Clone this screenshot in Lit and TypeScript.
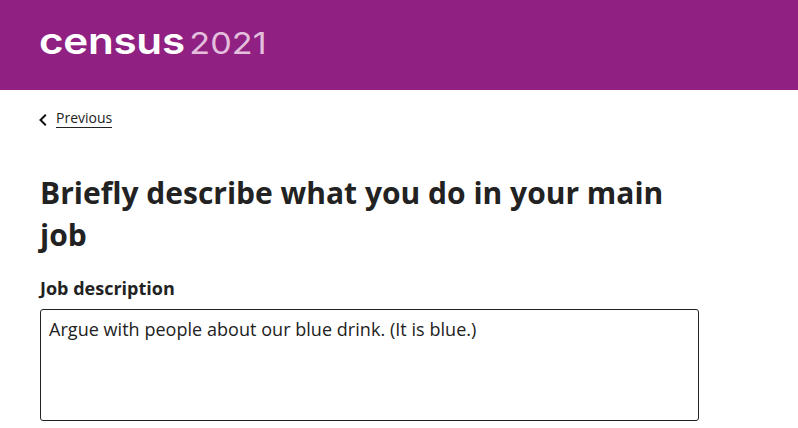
import { LitElement, html, css } from "lit";
import { customElement } from "lit/decorators.js";

@customElement("app-root")
export class AppRoot extends LitElement {
  static styles = css`
    :host {
      display: block;
      width: 798px;
      height: 428px;
      overflow: hidden;
      background: #fff;
      color: #222;
      font-family: "Open Sans", "Noto Sans", sans-serif;
    }
    .header {
      height: 90px;
      background: #902082;
      display: flex;
      align-items: center;
      padding-left: 39px;
      box-sizing: border-box;
    }
    .logo {
      display: flex;
      align-items: baseline;
      gap: 4px;
      font-family: "Inter", sans-serif;
      line-height: 36px;
      margin-top: -6px;
      transform: scaleX(1.14);
      transform-origin: left center;
    }
    .census {
      color: #fff;
      font-size: 37px;
      font-weight: 600;
      letter-spacing: -0.25px;
    }
    .year {
      color: #e3bfdd;
      font-size: 30px;
      font-weight: 400;
    }
    .main {
      padding: 0 40px;
    }
    .back {
      display: flex;
      align-items: center;
      gap: 9px;
      margin-left: -1px;
      padding-top: 18px;
      height: 19px;
      font-size: 14px;
      line-height: 19px;
    }
    .back svg {
      display: block;
      margin-top: 4px;
    }
    .back a {
      color: #222;
      text-decoration: none;
      border-bottom: 1px solid #222;
    }
    h1 {
      margin: 45px 0 0;
      width: 659px;
      font-size: 30px;
      line-height: 42px;
      font-weight: 700;
    }
    label {
      display: block;
      margin-top: 19px;
      font-size: 18px;
      line-height: 26px;
      font-weight: 700;
    }
    .input {
      box-sizing: border-box;
      width: 659px;
      height: 112px;
      margin-top: 8px;
      border: 1px solid #222;
      border-radius: 3px;
      padding: 6px 8px;
      font-size: 18px;
      line-height: 27px;
      letter-spacing: 0.04px;
    }
  `;

  render() {
    return html`
      <div class="header">
        <div class="logo">
          <span class="census">census</span><span class="year">2021</span>
        </div>
      </div>
      <div class="main">
        <div class="back">
          <svg width="8" height="12" viewBox="0 0 8 12">
            <path d="M6.8 0.8 L1.5 6 L6.8 11.2" fill="none" stroke="#111" stroke-width="2" />
          </svg>
          <a href="#">Previous</a>
        </div>
        <h1>Briefly describe what you do in your main job</h1>
        <label>Job description</label>
        <div class="input">Argue with people about our blue drink. (It is blue.)</div>
      </div>
    `;
  }
}
